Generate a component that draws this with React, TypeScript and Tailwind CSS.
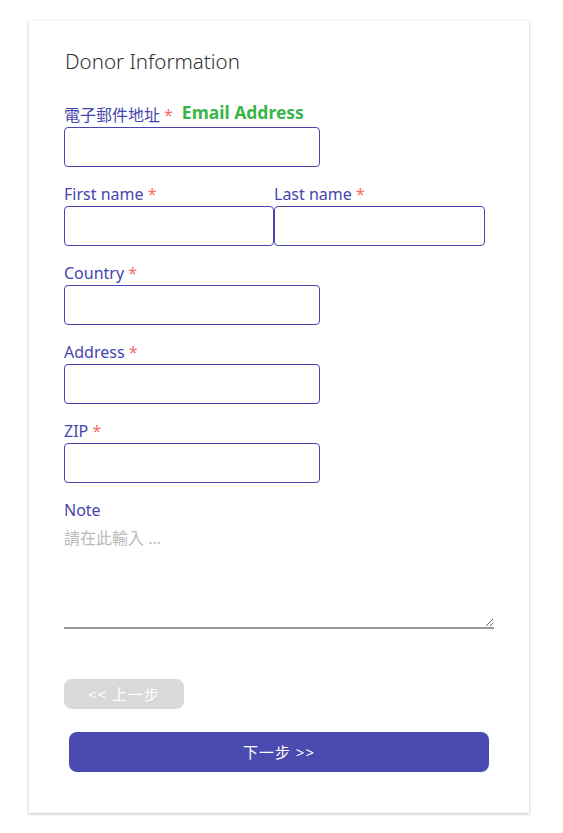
import React from "react";

const font = { fontFamily: '"Noto Sans", "Noto Sans CJK TC", sans-serif' };

function Field({ label, width = "w-[256px]" }: { label: string; width?: string }) {
  return (
    <div className="mb-4">
      <div className="h-[23px] text-[16px] leading-[23px] text-[#4646ae]">
        {label} <span className="text-[#f56c6c]">*</span>
      </div>
      <input className={`${width} h-[40px] rounded-[4px] border border-[#4646ae] bg-white outline-none`} />
    </div>
  );
}

export default function App() {
  return (
    <div className="min-h-[833px] bg-white pt-[21px]" style={font}>
      <div className="ml-[29px] w-[500px] bg-white px-[35px] pb-[41px] pt-[26px] shadow-[0_1px_3px_rgba(0,0,0,0.25)]">
        <h2 className="mb-[29px] ml-px text-[20.5px] leading-[28px] font-light text-[#333]">Donor Information</h2>
        <div className="mb-4">
          <div className="flex h-[23px] items-end text-[16px] leading-[23px] text-[#4646ae]">
            <span>電子郵件地址</span>
            <span className="ml-[4px] text-[#f56c6c]">*</span>
            <span className="mb-[3px] ml-[9px] text-[17.5px] font-bold leading-[23px] text-[#3bb54a]">Email Address</span>
          </div>
          <input className="h-[40px] w-[256px] rounded-[4px] border border-[#4646ae] bg-white outline-none" />
        </div>
        <div className="mb-4 flex">
          <div className="w-[210px]">
            <div className="h-[23px] text-[16px] leading-[23px] text-[#4646ae]">
              First name <span className="text-[#f56c6c]">*</span>
            </div>
            <input className="h-[40px] w-[210px] rounded-[4px] border border-[#4646ae] bg-white outline-none" />
          </div>
          <div className="w-[211px]">
            <div className="h-[23px] text-[16px] leading-[23px] text-[#4646ae]">
              Last name <span className="text-[#f56c6c]">*</span>
            </div>
            <input className="h-[40px] w-[211px] rounded-[4px] border border-[#4646ae] bg-white outline-none" />
          </div>
        </div>
        <Field label="Country" />
        <Field label="Address" />
        <Field label="ZIP" />
        <div>
          <div className="h-[23px] text-[16px] leading-[23px] text-[#4646ae]">Note</div>
          <textarea
            placeholder="請在此輸入 ..."
            className="block h-[107px] w-[430px] border-0 border-b-2 border-[#999] bg-white pt-[4px] text-[16px] leading-[24px] text-[#333] outline-none placeholder:text-[#bbb]"
          />
        </div>
        <button className="mt-[50px] block h-[30px] w-[120px] rounded-[8px] bg-[#d9d9d9] text-[15px] tracking-[1px] text-white">
          &lt;&lt; 上一步
        </button>
        <button className="ml-[5px] mt-[23px] block h-[40px] w-[420px] rounded-[8px] bg-[#4a4ab0] text-[15px] tracking-[1px] text-white">
          下一步 &gt;&gt;
        </button>
      </div>
    </div>
  );
}
